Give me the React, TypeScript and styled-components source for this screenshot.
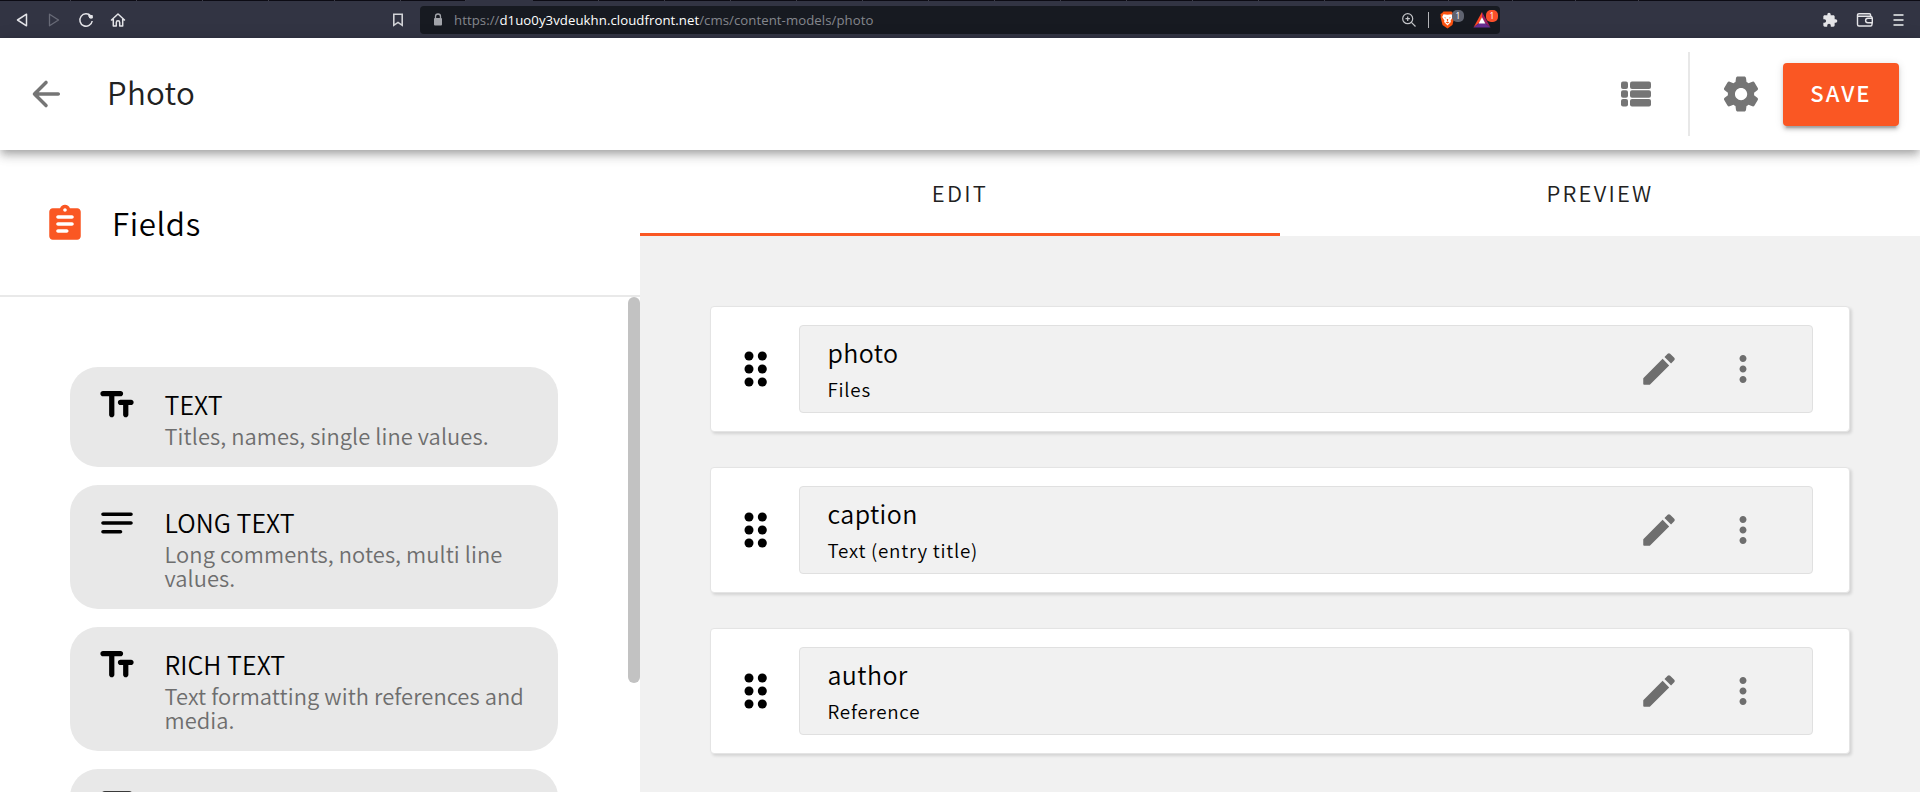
import React from 'react';
import styled, { createGlobalStyle } from 'styled-components';

const ORANGE = '#fa5723';

const Global = createGlobalStyle`
  * { box-sizing: border-box; }
  html, body { margin: 0; padding: 0; }
  body {
    font-family: "Noto Sans CJK SC", "Open Sans", sans-serif;
    font-weight: 350;
    color: #000;
    background: #fff;
    overflow: hidden;
  }
`;

const Page = styled.div`
  display: flex;
  flex-direction: column;
  width: 1920px;
  height: 792px;
  overflow: hidden;
`;

/* ---------- browser chrome ---------- */

const TabStrip = styled.div`
  display: flex;
  height: 1px;
  flex: none;
  background: #0c0b14;
`;

const TabSlot = styled.div<{ $w: number; $active?: boolean }>`
  width: ${(p) => p.$w}px;
  background: ${(p) => (p.$active ? '#323443' : '#0c0b14')};
  border-right: 1px solid ${(p) => (p.$active ? '#323443' : '#3c3c48')};
`;

const Chrome = styled.div`
  display: flex;
  align-items: center;
  height: 37px;
  flex: none;
  background: #323443;
  color: #e4e4e8;
`;

const ChromeNav = styled.div`
  display: flex;
  width: 420px;
  padding-left: 14px;
  gap: 16px;
  align-items: center;
`;

const BookmarkSlot = styled.div`
  display: flex;
  margin-left: auto;
  padding-right: 14px;
`;

const AddressBar = styled.div`
  display: flex;
  align-items: center;
  width: 1080px;
  height: 28px;
  padding-left: 13px;
  border-radius: 4px;
  background: #171a21;
`;

const Url = styled.div`
  flex: 1;
  margin-left: 11px;
  font-family: "Open Sans", "Noto Sans", sans-serif;
  font-size: 13.2px;
  font-weight: 400;
  line-height: 18px;
  letter-spacing: 0.06px;
  color: #85878d;
`;

const Host = styled.span`
  color: #fff;
`;

const BarDivider = styled.div`
  width: 1px;
  height: 16px;
  margin: 0 10px 0 12px;
  background: #b4b5b9;
`;

const ExtIcon = styled.div<{ $w: number }>`
  position: relative;
  display: flex;
  width: ${(p) => p.$w}px;
`;

const Badge = styled.span<{ $bg: string }>`
  position: absolute;
  top: -1px;
  left: 13px;
  width: 12px;
  height: 12px;
  border-radius: 5px;
  background: ${(p) => p.$bg};
  color: #fff;
  font: 8.500px/12px "Open Sans", sans-serif;
  text-align: center;
`;

const ChromeActions = styled.div`
  display: flex;
  align-items: center;
  gap: 18px;
  margin-left: auto;
  padding-right: 14px;
`;

/* ---------- app header ---------- */

const Header = styled.header`
  position: relative;
  z-index: 2;
  display: flex;
  align-items: center;
  height: 112px;
  flex: none;
  padding: 0 21px 0 25px;
  background: #fff;
  color: #757575;
  box-shadow:
    0 3.5px 7px -1.75px rgba(0, 0, 0, 0.2),
    0 7px 8.75px rgba(0, 0, 0, 0.14),
    0 1.75px 17.5px rgba(0, 0, 0, 0.12);
`;

const Title = styled.h1`
  margin: 0 auto 0 40px;
  padding-bottom: 4px;
  font-size: 31.3px;
  font-weight: 350;
  line-height: 56px;
  letter-spacing: 0.3px;
  color: #212121;
`;

const HeaderDivider = styled.div`
  width: 2px;
  height: 84px;
  margin: 0 30px 0 31px;
  background: #e8e8e8;
`;

const SaveButton = styled.button`
  width: 116px;
  height: 63px;
  margin-left: 21px;
  padding: 0 0 4px;
  border: 0;
  border-radius: 4px;
  background: ${ORANGE};
  color: #fff;
  font-family: inherit;
  font-size: 22px;
  font-weight: 500;
  letter-spacing: 2.1px;
  line-height: 59px;
  box-shadow:
    0 5.25px 1.75px -3.5px rgba(0, 0, 0, 0.2),
    0 3.5px 3.5px rgba(0, 0, 0, 0.14),
    0 1.75px 8.75px rgba(0, 0, 0, 0.12);
`;

/* ---------- body ---------- */

const Body = styled.div`
  display: flex;
  flex: 1;
  min-height: 0;
`;

const Sidebar = styled.aside`
  display: flex;
  flex-direction: column;
  width: 640px;
  flex: none;
  background: #fff;
`;

const SidebarHead = styled.div`
  display: flex;
  align-items: center;
  gap: 26px;
  height: 147px;
  flex: none;
  padding-left: 44px;
  border-bottom: 2px solid #e9e9e9;
  color: ${ORANGE};
`;

const SidebarIcon = styled.div`
  padding-top: 3px;
`;

const SidebarTitle = styled.h2`
  margin: 0;
  font-size: 31.3px;
  font-weight: 350;
  line-height: 56px;
  letter-spacing: 0.6px;
  color: #000;
`;

const SidebarScroll = styled.div`
  display: flex;
  justify-content: space-between;
  flex: 1;
  min-height: 0;
  overflow: hidden;
`;

const FieldList = styled.div`
  display: flex;
  flex-direction: column;
  gap: 18px;
  width: 558px;
  padding: 70px 0 0 70px;
`;

const Thumb = styled.div`
  width: 12px;
  height: 386px;
  border-radius: 6px;
  background: #c2c2c2;
`;

const FieldCard = styled.div`
  display: flex;
  flex: none;
  gap: 26.5px;
  padding: 17px 26px 18px;
  border-radius: 28px;
  background: #e8e8e8;
`;

const FieldIcon = styled.div`
  flex: none;
  width: 42px;
  height: 42px;
`;

const FieldText = styled.div`
  padding: 1.500px 0;
`;

const FieldName = styled.div`
  font-size: 25px;
  line-height: 36px;
  height: 38px;
  letter-spacing: 0.05px;
  white-space: nowrap;
`;

const FieldDesc = styled.div`
  width: 370px;
  font-size: 21.9px;
  line-height: 24px;
  letter-spacing: 0.08px;
  color: #6e6e6e;
`;

const Main = styled.main`
  display: flex;
  flex-direction: column;
  flex: 1;
  background: #f1f1f1;
`;

const Tabs = styled.div`
  display: flex;
  height: 86px;
  flex: none;
  background: #fff;
`;

const Tab = styled.div<{ $active?: boolean }>`
  flex: 1;
  height: 86px;
  border-bottom: 3px solid ${(p) => (p.$active ? ORANGE : 'transparent')};
  font-size: 22px;
  line-height: 84px;
  letter-spacing: 2.25px;
  text-align: center;
  color: #212121;
`;

const Rows = styled.div`
  display: flex;
  flex-direction: column;
  gap: 35px;
  padding: 70px 70px 0;
`;

const Row = styled.div`
  display: flex;
  align-items: center;
  height: 126px;
  padding: 0 36px 0 23px;
  border: 1px solid #e4e4e4;
  border-radius: 4px;
  background: #fff;
  box-shadow: 2px 2px 3px rgba(0, 0, 0, 0.12);
`;

const RowInner = styled.div`
  display: flex;
  align-items: center;
  flex: 1;
  height: 88px;
  margin-left: 23px;
  padding: 0 48px 0 27.5px;
  border: 1px solid #e0e0e0;
  border-radius: 4px;
  background: #f1f1f1;
  color: #6e6e6e;
`;

const RowText = styled.div`
  flex: 1;
  padding-top: 3px;
  color: #000;
`;

const RowTitle = styled.div`
  font-size: 25px;
  line-height: 37px;
  letter-spacing: 0.4px;
`;

const RowType = styled.div`
  font-size: 18.8px;
  line-height: 36px;
  letter-spacing: 0.76px;
`;

const Actions = styled.div`
  display: flex;
  gap: 42px;
`;

/* ---------- icons ---------- */

const Svg = styled.svg`
  display: block;
  flex: none;
`;

const Glyph = ({ d, size = 42 }: { d: string; size?: number }) => (
  <Svg width={size} height={size} viewBox="0 0 24 24" fill="currentColor">
    <path d={d} />
  </Svg>
);

const BACK =
  'M19 11H7.83l4.88-4.88c.39-.39.39-1.03 0-1.42a.996.996 0 0 0-1.41 0l-6.59 6.59a.996.996 0 0 0 0 1.41l6.59 6.59a.996.996 0 1 0 1.41-1.41L7.83 13H19c.55 0 1-.45 1-1s-.45-1-1-1z';
const GEAR =
  'M19.5 12c0-.23-.01-.45-.03-.68l1.86-1.41c.4-.3.51-.86.26-1.3l-1.87-3.23a.987.987 0 0 0-1.25-.42l-2.15.91c-.37-.26-.76-.49-1.17-.68l-.29-2.31c-.06-.5-.49-.88-.99-.88h-3.73c-.51 0-.94.38-1 .88l-.29 2.31c-.41.19-.8.42-1.17.68l-2.15-.91c-.46-.2-1-.02-1.25.42L2.41 8.62c-.25.44-.14.99.26 1.3l1.86 1.41a7.343 7.343 0 0 0 0 1.35l-1.86 1.41c-.4.3-.51.86-.26 1.3l1.87 3.23c.25.44.79.62 1.25.42l2.15-.91c.37.26.76.49 1.17.68l.29 2.31c.06.5.49.88.99.88h3.73c.5 0 .93-.38.99-.88l.29-2.31c.41-.19.8-.42 1.17-.68l2.15.91c.46.2 1 .02 1.25-.42l1.87-3.23c.25-.44.14-.99-.26-1.3l-1.86-1.41c.03-.23.04-.45.04-.68zm-7.46 3.5c-1.93 0-3.5-1.57-3.5-3.5s1.57-3.5 3.5-3.5 3.5 1.57 3.5 3.5-1.57 3.5-3.5 3.5z';
const CLIPBOARD =
  'M19 3h-4.18C14.4 1.84 13.3 1 12 1s-2.4.84-2.82 2H5c-1.1 0-2 .9-2 2v14c0 1.100.9 2 2 2h14c1.100 0 2-.9 2-2V5c0-1.100-.9-2-2-2zm-7 0c.55 0 1 .45 1 1s-.45 1-1 1-1-.45-1-1 .45-1 1-1zm1 14H8c-.55 0-1-.45-1-1s.45-1 1-1h5c.55 0 1 .45 1 1s-.45 1-1 1zm3-4H8c-.55 0-1-.45-1-1s.45-1 1-1h8c.55 0 1 .45 1 1s-.45 1-1 1zm0-4H8c-.55 0-1-.45-1-1s.45-1 1-1h8c.55 0 1 .45 1 1s-.45 1-1 1z';
const TEXT_FIELDS =
  'M2.500 5.500C2.500 6.330 3.170 7 4 7h3.500v10.500c0 .83.67 1.500 1.500 1.500s1.500-.67 1.500-1.500V7H14c.83 0 1.500-.67 1.500-1.500S14.830 4 14 4H4c-.83 0-1.500.67-1.500 1.500zM20 9h-6c-.83 0-1.500.67-1.500 1.500S13.170 12 14 12h1.500v5.500c0 .83.67 1.500 1.500 1.500s1.500-.67 1.500-1.500V12H20c.83 0 1.500-.67 1.500-1.500S20.830 9 20 9z';
const NOTES =
  'M20 11H4c-.55 0-1 .45-1 1s.45 1 1 1h16c.55 0 1-.45 1-1s-.45-1-1-1zM4 18h10c.55 0 1-.45 1-1s-.45-1-1-1H4c-.55 0-1 .45-1 1s.45 1 1 1zM20 6H4c-.55 0-1 .45-1 1s.45 1 1 1h16c.55 0 1-.45 1-1s-.45-1-1-1z';
const NUMBER_BOX =
  'M19 3H5a2 2 0 0 0-2 2v14a2 2 0 0 0 2 2h14a2 2 0 0 0 2-2V5a2 2 0 0 0-2-2z';
const PENCIL =
  'M3 17.460v3.040c0 .28.22.5.5.5h3.040c.13 0 .26-.05.35-.15L17.810 9.940l-3.750-3.750L3.150 17.100c-.1.1-.15.220-.15.360zM20.710 7.040a.996.996 0 0 0 0-1.410l-2.340-2.340a.996.996 0 0 0-1.410 0l-1.830 1.830 3.750 3.750 1.830-1.830z';
const MORE =
  'M12 8c1.100 0 2-.9 2-2s-.9-2-2-2-2 .9-2 2 .9 2 2 2zm0 2c-1.100 0-2 .9-2 2s.9 2 2 2 2-.9 2-2-.9-2-2-2zm0 6c-1.100 0-2 .9-2 2s.9 2 2 2 2-.9 2-2-.9-2-2-2z';
const PUZZLE =
  'M20.500 11H19V7c0-1.100-.9-2-2-2h-4V3.500a2.500 2.500 0 0 0-5 0V5H4c-1.100 0-2 .9-2 2v3.800h1.500a2.700 2.700 0 0 1 0 5.400H2V20c0 1.100.9 2 2 2h3.800v-1.500a2.700 2.700 0 0 1 5.400 0V22H17c1.100 0 2-.9 2-2v-4h1.500a2.500 2.500 0 0 0 0-5z';

const ViewList = () => (
  <Svg width="42" height="42" viewBox="0 0 42 42" fill="currentColor">
    {[8.5, 17.3, 26].map((y) => (
      <g key={y}>
        <rect x="6" y={y} width="7" height="7.500" rx="2" />
        <rect x="15" y={y} width="21" height="7.500" rx="2" />
      </g>
    ))}
  </Svg>
);

const DragHandle = () => (
  <Svg width="42" height="42" viewBox="0 0 42 42" fill="#000">
    {[8, 21, 34].map((y) => (
      <g key={y}>
        <circle cx="15" cy={y} r="4.500" />
        <circle cx="28.300" cy={y} r="4.500" />
      </g>
    ))}
  </Svg>
);

const BackTriangle = () => (
  <Svg width="16" height="16" viewBox="0 0 16 16" fill="none" stroke="currentColor" strokeWidth="1.500" strokeLinejoin="round">
    <path d="M12.500 2.200v11.600L3.500 8z" />
  </Svg>
);
const ForwardTriangle = () => (
  <Svg width="16" height="16" viewBox="0 0 16 16" fill="none" stroke="#686a77" strokeWidth="1.300" strokeLinejoin="round">
    <path d="M3.500 2.200v11.600L12.500 8z" />
  </Svg>
);
const Reload = () => (
  <Svg width="16" height="16" viewBox="0 0 16 16" fill="none" stroke="currentColor" strokeWidth="1.500">
    <path d="M12.800 4A6.200 6.200 0 1 0 14.200 9" />
    <path d="M10.500 3.500h3.800v2.600h-2.500z" fill="currentColor" strokeWidth="1" />
  </Svg>
);
const House = () => (
  <Svg width="16" height="16" viewBox="0 0 16 16" fill="none" stroke="currentColor" strokeWidth="1.500" strokeLinejoin="round" strokeLinecap="round">
    <path d="M1.500 8 8 2l6.500 6M3.300 7v7h3v-3.500a1.700 1.700 0 0 1 3.400 0V14h3V7" />
  </Svg>
);
const Bookmark = () => (
  <Svg width="16" height="16" viewBox="0 0 16 16" fill="none" stroke="#d2d3d7" strokeWidth="1.600">
    <path d="M3.800 2.300h8.400v11L8 10.400l-4.200 2.900z" />
  </Svg>
);
const Lock = () => (
  <Svg width="10" height="14" viewBox="0 0 10 14">
    <path d="M2.500 6V3.500a2.500 2.500 0 0 1 5 0V6" fill="none" stroke="#a2a4aa" strokeWidth="1.300" />
    <rect x="1" y="5" width="8" height="7.500" rx="1" fill="#a2a4aa" />
  </Svg>
);
const Magnifier = () => (
  <Svg width="16" height="16" viewBox="0 0 16 16" fill="none" stroke="#c4c5c9" strokeWidth="1.200">
    <circle cx="7.700" cy="6.700" r="5" />
    <path d="M11.400 10.400 15.500 14.500M5.500 6.700h4.400M7.700 4.500v4.400" />
  </Svg>
);
const BraveShield = () => (
  <Svg width="17" height="18" viewBox="0 0 16 18">
    <path d="M4 .6h8L13.600 2.300l1.400.6-.4 2 .3 1.200-2 8L8 17.600 3 14.100l-2-8 .3-1.200-.4-2 1.400-.6z" fill="#fb5210" />
    <path d="M8 3.800 12 3.200l1.300 2.700-2.200 3.600.3 1.600L8 14.400l-3.400-3.300.3-1.600L2.700 5.900 4 3.200z" fill="#fff" />
    <path d="M4.300 6.200l2.200.6-.3.8zM11.700 6.200l-2.200.6.3.8zM7.200 8h1.600L8.400 10H7.600zM6 11.200l2-.6 2 .6-2 1.300z" fill="#fb5210" />
  </Svg>
);
const BatTriangle = () => (
  <Svg width="18" height="18" viewBox="0 0 18 18">
    <path d="M9 1 0.500 16.500 6 12 9 7z" fill="#ff4724" />
    <path d="M9 1 17.500 16.500 12 12 9 7z" fill="#9e1f63" />
    <path d="M.5 16.500h17L12 12H6z" fill="#662d91" />
    <path d="M9 6.300 12.400 12.600H5.600z" fill="#fff" />
  </Svg>
);
const Wallet = () => (
  <Svg width="18" height="16" viewBox="0 0 18 16" fill="none" stroke="currentColor" strokeWidth="1.400">
    <path d="M14.500 4.500V2.700q0-1-1-1H3q-1.500 0-1.500 1.500v9.300q0 1.500 1.500 1.500h11.500q1.500 0 1.500-1.500V11" />
    <path d="M1.500 4.300h13q1.500 0 1.500 1.500V6" />
    <path d="M16.300 6.300h-4.500a2.200 2.200 0 0 0 0 4.400h4.500z" />
  </Svg>
);
const Hamburger = () => (
  <Svg width="14" height="16" viewBox="0 0 14 16" stroke="#bfc2c6" strokeWidth="2">
    <path d="M1.500 3h10M1.500 8h10M1.500 13h10" />
  </Svg>
);

/* ---------- data ---------- */

const fields = [
  { icon: TEXT_FIELDS, name: 'TEXT', desc: 'Titles, names, single line values.' },
  { icon: NOTES, name: 'LONG TEXT', desc: 'Long comments, notes, multi line values.' },
  { icon: TEXT_FIELDS, name: 'RICH TEXT', desc: 'Text formatting with references and media.' },
  { icon: NUMBER_BOX, name: '', desc: '' },
];

const rows = [
  { title: 'photo', type: 'Files' },
  { title: 'caption', type: 'Text (entry title)' },
  { title: 'author', type: 'Reference' },
];

const tabSlots = [71, 66, 66, 66, 66, 66, 65, 67, 66, 66, 66, 66, 66, 66, 66, 66, 66, 66, 66, 66, 60, 64, 64, 63, 63];

export default function App() {
  return (
    <Page>
      <Global />
      <TabStrip>
        {tabSlots.map((w, i) => (
          <TabSlot key={i} $w={w} $active={i === 7} />
        ))}
      </TabStrip>
      <Chrome>
        <ChromeNav>
          <BackTriangle />
          <ForwardTriangle />
          <Reload />
          <House />
          <BookmarkSlot>
            <Bookmark />
          </BookmarkSlot>
        </ChromeNav>
        <AddressBar>
          <Lock />
          <Url>
            https://<Host>d1uo0y3vdeukhn.cloudfront.net</Host>/cms/content-models/photo
          </Url>
          <Magnifier />
          <BarDivider />
          <ExtIcon $w={34}>
            <BraveShield />
            <Badge $bg="#5f6370">1</Badge>
          </ExtIcon>
          <ExtIcon $w={27}>
            <BatTriangle />
            <Badge $bg="#fb4f2b">1</Badge>
          </ExtIcon>
        </AddressBar>
        <ChromeActions>
          <Glyph d={PUZZLE} size={16} />
          <Wallet />
          <Hamburger />
        </ChromeActions>
      </Chrome>

      <Header>
        <Glyph d={BACK} />
        <Title>Photo</Title>
        <ViewList />
        <HeaderDivider />
        <Glyph d={GEAR} />
        <SaveButton>SAVE</SaveButton>
      </Header>

      <Body>
        <Sidebar>
          <SidebarHead>
            <SidebarIcon>
              <Glyph d={CLIPBOARD} />
            </SidebarIcon>
            <SidebarTitle>Fields</SidebarTitle>
          </SidebarHead>
          <SidebarScroll>
            <FieldList>
              {fields.map((f, i) => (
                <FieldCard key={i}>
                  <FieldIcon>
                    <Glyph d={f.icon} />
                  </FieldIcon>
                  <FieldText>
                    <FieldName>{f.name}</FieldName>
                    <FieldDesc>{f.desc}</FieldDesc>
                  </FieldText>
                </FieldCard>
              ))}
            </FieldList>
            <Thumb />
          </SidebarScroll>
        </Sidebar>

        <Main>
          <Tabs>
            <Tab $active>EDIT</Tab>
            <Tab>PREVIEW</Tab>
          </Tabs>
          <Rows>
            {rows.map((r) => (
              <Row key={r.title}>
                <DragHandle />
                <RowInner>
                  <RowText>
                    <RowTitle>{r.title}</RowTitle>
                    <RowType>{r.type}</RowType>
                  </RowText>
                  <Actions>
                    <Glyph d={PENCIL} />
                    <Glyph d={MORE} />
                  </Actions>
                </RowInner>
              </Row>
            ))}
          </Rows>
        </Main>
      </Body>
    </Page>
  );
}
